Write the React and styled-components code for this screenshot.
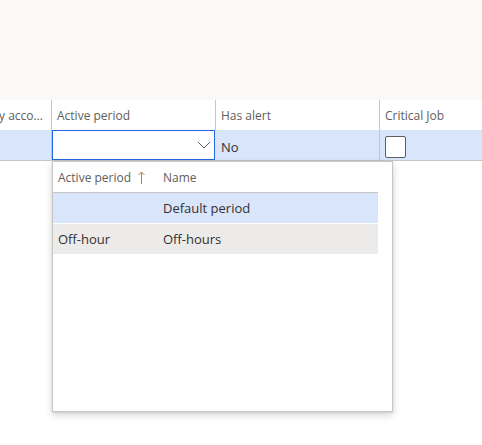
import React from 'react'
import styled, { createGlobalStyle } from 'styled-components'

const GlobalStyle = createGlobalStyle`
    body {
        margin: 0;
        background: #ffffff;
        font-family: "Open Sans", "Noto Sans", sans-serif;
        color: #323130;
    }
`

const Page = styled.div`
    width: 482px;
    height: 445px;
    overflow: hidden;
    position: relative;
`

const TopBar = styled.div`
    height: 100px;
    background: #faf9f8;
`

const Row = styled.div`
    display: grid;
    grid-template-columns: 52px 164px 164px 1fr;
    height: ${p => p.$height}px;
    background: ${p => p.$bg};
    border-bottom: ${p => (p.$line ? '1px solid #c8c6c4' : 'none')};
`

const Cell = styled.div`
    display: flex;
    align-items: center;
    padding-left: ${p => (p.$pad ?? 5)}px;
    padding-top: ${p => (p.$drop ? 4 : 0)}px;
    border-right: ${p => (p.$last ? 'none' : '1px solid #c8c6c4')};
    font-size: 12px;
    color: ${p => (p.$head ? '#605e5c' : '#323130')};
    overflow: hidden;
    white-space: nowrap;
`

const Clipped = styled.span`
    margin-left: -1px;
`

const InputBox = styled.div`
    display: flex;
    align-items: center;
    justify-content: flex-end;
    padding-right: 3px;
    background: #ffffff;
    border: 1px solid #2266e3;
    margin: 0 1px 0 0;
`

const ValueText = styled.span`
    font-size: 13px;
    color: #323130;
`

const Checkbox = styled.div`
    width: 19px;
    height: 20px;
    border: 1px solid #605e5c;
    border-radius: 2px;
    background: #ffffff;
`

const Flyout = styled.div`
    position: absolute;
    left: 52px;
    top: 161px;
    width: 339px;
    height: 249px;
    background: #ffffff;
    border: 1px solid #c8c6c4;
    box-shadow: 0 3px 8px rgba(0, 0, 0, 0.16), 0 1px 2px rgba(0, 0, 0, 0.1);
`

const List = styled.div`
    width: 325px;
`

const ListRow = styled.div`
    display: grid;
    grid-template-columns: 105px 1fr;
    height: ${p => p.$height}px;
    background: ${p => p.$bg};
    border-bottom: 1px solid ${p => p.$line};
`

const ListCell = styled.div`
    display: flex;
    align-items: center;
    gap: 7px;
    padding-left: 5px;
    font-size: ${p => (p.$head ? 12 : 13)}px;
    color: ${p => (p.$head ? '#605e5c' : '#323130')};
    white-space: nowrap;
`

const Chevron = () => (
    <svg width="14" height="8" viewBox="0 0 14 8">
        <polyline points="1,1 7,7 13,1" fill="none" stroke="#605e5c" strokeWidth="1" />
    </svg>
)

const SortUp = () => (
    <svg width="7" height="13" viewBox="0 0 7 13">
        <line x1="3.5" y1="1" x2="3.5" y2="13" stroke="#c97b36" strokeWidth="1" />
        <polyline points="0.5,4 3.5,1 6.5,4" fill="none" stroke="#c97b36" strokeWidth="1" />
    </svg>
)

const App = () => {
    return (
        <Page>
            <GlobalStyle />
            <TopBar />
            <Row $height={30} $bg="#ffffff">
                <Cell $head $pad={0}><Clipped>y acco…</Clipped></Cell>
                <Cell $head>Active period</Cell>
                <Cell $head>Has alert</Cell>
                <Cell $head $last>Critical Job</Cell>
            </Row>
            <Row $height={30} $bg="#d9e5fb" $line>
                <Cell $pad={0} />
                <InputBox><Chevron /></InputBox>
                <Cell $drop><ValueText>No</ValueText></Cell>
                <Cell $drop $last><Checkbox /></Cell>
            </Row>
            <Flyout>
                <List>
                    <ListRow $height={30} $bg="#ffffff" $line="#c8c6c4">
                        <ListCell $head>Active period <SortUp /></ListCell>
                        <ListCell $head>Name</ListCell>
                    </ListRow>
                    <ListRow $height={30} $bg="#d9e5fb" $line="#ffffff">
                        <ListCell />
                        <ListCell>Default period</ListCell>
                    </ListRow>
                    <ListRow $height={30} $bg="#edebe9" $line="#ffffff">
                        <ListCell>Off-hour</ListCell>
                        <ListCell>Off-hours</ListCell>
                    </ListRow>
                </List>
            </Flyout>
        </Page>
    )
}

export default App
